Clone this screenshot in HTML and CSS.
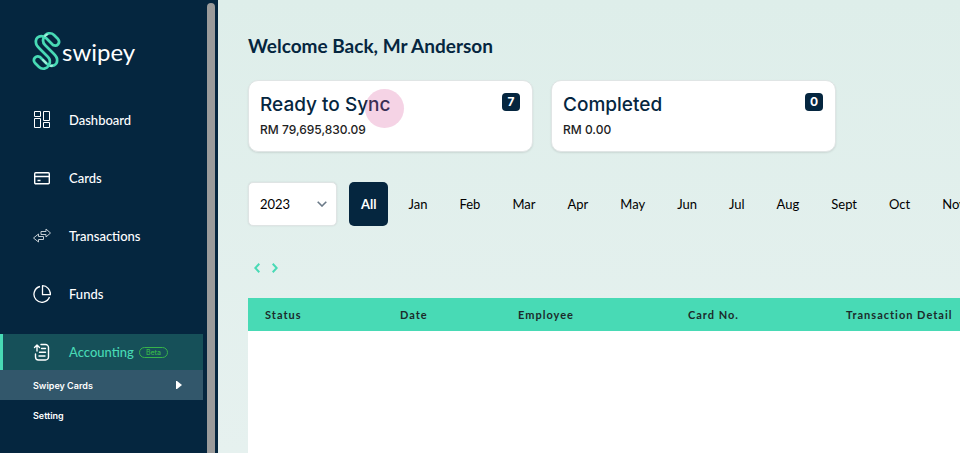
FILE: index.html
```html
<!DOCTYPE html>
<html lang="en">

<head>
    <meta charset="UTF-8">
    <meta name="viewport" content="width=device-width, initial-scale=1.0">
    <title>Swipey - Accounting</title>
    <link rel="stylesheet" href="styles.css">
</head>

<body>
    <div class="layout">
        <aside class="sidebar">
            <div class="sidebar-content">
                <a href="#" class="logo">
                    <svg width="30" height="40" viewBox="0 0 30 40" fill="none" stroke="#48dab5" stroke-width="2.700" stroke-linecap="round" stroke-linejoin="round">
                        <path d="M12 6C14 2 19 1 22 4L26 8C29 12 25 16 21 14L14 7C9 3 3 6 4 12C4 14 5 15 7 17L16 26C19 29 18 32 17 34" />
                        <path d="M17 34C15 38 10 39 7 36L3 32C0 28 4 24 8 26L15 33C20 37 26 34 25 28C25 26 24 25 22 23L13 14C10 11 11 8 12 6" />
                        <path d="M13 5L15 3.500M11 29L14 32M19 35L20 34.500" stroke="#a5eddb" stroke-width="2" />
                    </svg>
                    <span>swipey</span>
                </a>
                <nav class="menu">
                    <a href="#" class="menu-item">
                        <svg width="18" height="18" viewBox="0 0 18 18" fill="none" stroke="#fff">
                            <path d="M1.500 .5h6v5h-6zM10.500 .5h6v9h-6zM1.500 7.500h6v9h-6zM10.500 11.500h6v5h-6z" />
                        </svg>
                        <span>Dashboard</span>
                    </a>
                    <a href="#" class="menu-item">
                        <svg width="18" height="18" viewBox="0 0 18 18" fill="none" stroke="#fff" stroke-width="1.4">
                            <rect x="1.700" y="3.700" width="14.600" height="11" rx="1" />
                            <path d="M2 7.500h14M4.500 11.500h3" />
                        </svg>
                        <span>Cards</span>
                    </a>
                    <a href="#" class="menu-item">
                        <svg width="18" height="18" viewBox="0 0 18 18" fill="none" stroke="#c3ccd3" stroke-width="1" stroke-linejoin="round">
                            <path d="M8 4.500h5v-2.500l4.500 4l-4.500 4v-2.500h-5z" />
                            <path d="M10.500 9.500v3h-5v2.500l-5-4l5-4v2.500z" />
                        </svg>
                        <span>Transactions</span>
                    </a>
                    <a href="#" class="menu-item">
                        <svg width="18" height="18" viewBox="0 0 18 18" fill="none" stroke="#fff" stroke-width="1.300" stroke-linejoin="round">
                            <path d="M7 1.500A8 8 0 1 0 16.500 12" />
                            <path d="M9.500 .7v9h8a8 9 0 0 0-8-9z" />
                        </svg>
                        <span>Funds</span>
                    </a>
                    <div class="menu-group">
                        <a href="#" class="menu-item active">
                            <svg width="18" height="18" viewBox="0 0 18 18" fill="none" stroke="#fff" stroke-width="1.400" stroke-linecap="round" stroke-linejoin="round">
                                <path d="M8 1.500h4.500a3 3 0 0 1 3 3v9.500a3 3 0 0 1-3 3h-7a3 3 0 0 1-3-3v-3" />
                                <path d="M4 8v-6M1.500 4.500l2.500-2.500l2.500 2.500M8.500 5.500h4M6.500 9.200h6M6 13h6" />
                            </svg>
                            <span>Accounting</span>
                            <span class="beta">Beta</span>
                        </a>
                        <a href="#" class="submenu-item selected">
                            <span>Swipey Cards</span>
                            <svg width="6" height="8" viewBox="0 0 6 8" fill="#fff">
                                <path d="M0 0h1l5 4l-5 4h-1z" />
                            </svg>
                        </a>
                        <a href="#" class="submenu-item">Setting</a>
                    </div>
                </nav>
            </div>
            <div class="scrollbar"></div>
        </aside>

        <main class="content">
            <h1>Welcome Back, Mr Anderson</h1>

            <div class="cards">
                <section class="card">
                    <div>
                        <h2>Ready to Sync</h2>
                        <p>RM 79,695,830.09</p>
                    </div>
                    <span class="count">7</span>
                    <span class="pointer"></span>
                </section>
                <section class="card">
                    <div>
                        <h2>Completed</h2>
                        <p>RM 0.00</p>
                    </div>
                    <span class="count">0</span>
                </section>
            </div>

            <div class="filters">
                <select class="year" aria-label="Year">
                    <option>2023</option>
                    <option>2022</option>
                </select>
                <svg class="chevron" width="10" height="6" viewBox="0 0 10 6" fill="none" stroke="#6b7a88" stroke-width="1.600">
                    <path d="M.7 .7L5 5L9.300 .7" />
                </svg>
                <div class="months">
                    <button class="month active">All</button>
                    <button class="month">Jan</button>
                    <button class="month">Feb</button>
                    <button class="month">Mar</button>
                    <button class="month">Apr</button>
                    <button class="month">May</button>
                    <button class="month">Jun</button>
                    <button class="month">Jul</button>
                    <button class="month">Aug</button>
                    <button class="month">Sept</button>
                    <button class="month">Oct</button>
                    <button class="month">Nov</button>
                </div>
            </div>

            <div class="pager">
                <button aria-label="Previous page">
                    <svg width="6" height="10" viewBox="0 0 6 10" fill="none" stroke="#48dab5" stroke-width="2">
                        <path d="M5.300 .8L1.300 5L5.300 9.200" />
                    </svg>
                </button>
                <button aria-label="Next page">
                    <svg width="6" height="10" viewBox="0 0 6 10" fill="none" stroke="#48dab5" stroke-width="2">
                        <path d="M.7 .8L4.700 5L.7 9.200" />
                    </svg>
                </button>
            </div>

            <div class="table-box">
                <table>
                    <thead>
                        <tr>
                            <th class="col-status">Status</th>
                            <th class="col-date">Date</th>
                            <th class="col-employee">Employee</th>
                            <th class="col-card">Card No.</th>
                            <th>Transaction Detail</th>
                        </tr>
                    </thead>
                </table>
            </div>
        </main>
    </div>
</body>

</html>
```

FILE: styles.css
```css
* {
    box-sizing: border-box;
}

body {
    margin: 0;
    font-family: Lato, sans-serif;
    font-size: 13px;
    color: #05263f;
}

a {
    color: inherit;
    text-decoration: none;
}

button {
    border: none;
    background: none;
    font: inherit;
}

.layout {
    display: flex;
    height: 100vh;
    overflow: hidden;
}

/* sidebar */
.sidebar {
    display: flex;
    flex: 0 0 218px;
    gap: 4px;
    padding-right: 3px;
    background-color: #05263f;
    color: #fff;
}

.sidebar-content {
    flex: 1;
}

.scrollbar {
    width: 8px;
    margin-top: 3px;
    border-radius: 4px 4px 0 0;
    background-color: #9b9b9b;
}

.logo {
    display: flex;
    align-items: center;
    height: 102px;
    padding-left: 32px;
    font-size: 24px;
}

.menu {
    display: flex;
    flex-direction: column;
    gap: 22px;
}

.menu-item {
    display: flex;
    align-items: center;
    height: 36px;
    padding-left: 33px;
    font-weight: 500;
}

.menu-item svg {
    margin-right: 18px;
}

.menu-item.active {
    padding-left: 30px;
    border-left: 3px solid #48dab5;
    background-color: #165059;
    color: #48dab5;
}

.beta {
    margin-left: 5px;
    padding: 0 6px;
    border: 1px solid #37b34a;
    border-radius: 6px;
    color: #37b34a;
    font-family: Inter, sans-serif;
    font-size: 7px;
    line-height: 9px;
}

.submenu-item {
    display: flex;
    align-items: center;
    justify-content: space-between;
    height: 30px;
    padding: 0 21px 0 33px;
    font-family: Inter, sans-serif;
    font-size: 9px;
    font-weight: 600;
}

.submenu-item.selected {
    background-color: #32576b;
}

/* main area */
.content {
    display: flex;
    flex: 1;
    flex-direction: column;
    min-width: 0;
    padding: 34px 0 0 30px;
    background: linear-gradient(#deeeea, #e6f1ef);
}

h1 {
    margin: 0;
    font-size: 19px;
    line-height: 24px;
}

.cards {
    display: flex;
    gap: 18px;
    margin-top: 22px;
}

.card {
    display: flex;
    justify-content: space-between;
    position: relative;
    width: 285px;
    height: 72px;
    padding: 12px 12px 0 11px;
    border: 1px solid #e0e5e5;
    border-radius: 10px;
    background-color: #fff;
    box-shadow: 0 1px 2px rgba(0, 0, 0, 0.1);
    font-family: Inter, sans-serif;
}

.card h2 {
    margin: 0;
    font-size: 19px;
    font-weight: 500;
    line-height: 24px;
}

.card p {
    margin: 2px 0 0;
    color: #222;
    font-size: 12px;
    font-weight: 500;
    line-height: 22px;
}

.count {
    width: 18px;
    height: 18px;
    border-radius: 4px;
    background-color: #05263f;
    color: #fff;
    font-size: 12px;
    font-weight: 700;
    line-height: 18px;
    text-align: center;
}

.pointer {
    position: absolute;
    top: 8px;
    left: 116px;
    width: 39px;
    height: 39px;
    border-radius: 50%;
    background-color: rgba(215, 80, 150, 0.25);
}

.filters {
    display: flex;
    align-items: center;
    margin-top: 30px;
}

.year {
    appearance: none;
    flex: none;
    width: 89px;
    height: 44px;
    padding: 0 11px;
    border: 1px solid #dfe4e4;
    border-radius: 5px;
    background-color: #fff;
    box-shadow: 0 0 2px rgba(0, 0, 0, 0.1);
    color: #000;
    font: inherit;
}

.chevron {
    flex: none;
    margin-left: -20px;
    margin-right: 22px;
    pointer-events: none;
}

.months {
    display: flex;
    gap: 8px;
}

.month {
    height: 44px;
    padding: 0 12px;
    border-radius: 5px;
    color: #000;
}

.month.active {
    background-color: #05263f;
    color: #fff;
    font-weight: 700;
}

.pager {
    display: flex;
    gap: 12px;
    margin-top: 37px;
    padding-left: 6px;
}

.pager button {
    display: flex;
    padding: 0;
}

.table-box {
    flex: 1;
    margin-top: 25px;
    background-color: #fff;
}

table {
    width: 100%;
    border-collapse: collapse;
    table-layout: fixed;
}

th {
    height: 33px;
    padding: 0 0 0 17px;
    background-color: #48dab5;
    color: #1c2b2b;
    font-size: 11px;
    letter-spacing: 1px;
    text-align: left;
    white-space: nowrap;
}

.col-status {
    width: 135px;
}

.col-date {
    width: 118px;
}

.col-employee {
    width: 170px;
}

.col-card {
    width: 158px;
}
```
